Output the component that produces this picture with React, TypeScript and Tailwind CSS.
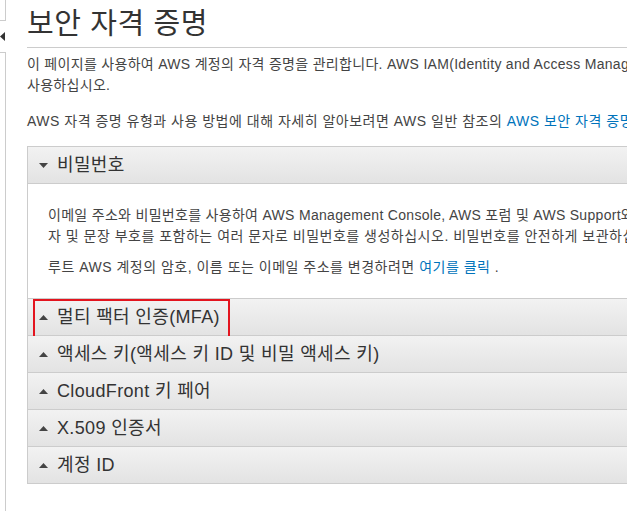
import React from "react";

const font = { fontFamily: '"Liberation Sans", "Noto Sans CJK KR", sans-serif' };

function CaretDown() {
  return (
    <svg width="9" height="5" viewBox="0 0 9 5" className="shrink-0">
      <path d="M0 0 L9 0 L4.5 5 Z" fill="#444" />
    </svg>
  );
}
function CaretUp() {
  return (
    <svg width="9" height="5" viewBox="0 0 9 5" className="shrink-0">
      <path d="M0 5 L9 5 L4.5 0 Z" fill="#444" />
    </svg>
  );
}

function Header({ label, open, highlight }: { label: string; open?: boolean; highlight?: boolean }) {
  return (
    <div className="relative h-[37px] flex items-center pl-[11px] gap-[9px] border-b border-[#cccccc] bg-gradient-to-b from-[#f2f2f2] to-[#e3e3e3] text-[18px] tracking-[0.35px] text-[#333]">
      {open ? <CaretDown /> : <CaretUp />}
      <span className="whitespace-nowrap">{label}</span>
      {highlight && (
        <div className="absolute left-[5px] top-[0px] w-[197px] h-[39px] border-2 border-[#e3141e]" />
      )}
    </div>
  );
}

export default function App() {
  return (
    <div className="w-[627px] h-[511px] overflow-hidden bg-white flex text-[#444]" style={font}>
      <div className="w-[6px] shrink-0 flex flex-col">
        <div className="h-[21px] border-r border-b border-[#cccccc]" />
        <div className="h-[31px] flex items-center">
          <svg width="5" height="9" viewBox="0 0 5 9">
            <path d="M5 0 L5 9 L0 4.5 Z" fill="#333" />
          </svg>
        </div>
        <div className="flex-1 border-r border-t border-[#cccccc]" />
      </div>
      <div className="pl-[21px] w-[960px] shrink-0">
        <h1 className="text-[29px] leading-[40px] pt-[4px] tracking-[0.6px] text-[#333] pb-[3px] border-b border-[#cccccc] whitespace-nowrap">
          보안 자격 증명
        </h1>
        <div className="text-[14px] leading-[21px]">
          <p className="mt-[6px] whitespace-nowrap tracking-[0.3px]">
            이 페이지를 사용하여 AWS 계정의 자격 증명을 관리합니다. AWS IAM(Identity and Access Management)을 사용하여 사용자를 관리하는 것을
            <br />
            사용하십시오.
          </p>
          <p className="mt-[15px] whitespace-nowrap tracking-[0.5px]">
            AWS 자격 증명 유형과 사용 방법에 대해 자세히 알아보려면 AWS 일반 참조의{" "}
            <span className="text-[#0073bb]">AWS 보안 자격 증명</span>을 참조하십시오.
          </p>
        </div>
        <div className="mt-[14px] border border-[#cccccc] border-b-0">
          <Header label="비밀번호" open />
          <div className="bg-white border-b border-[#cccccc] pl-[20px] pt-[21px] pb-[20px] text-[14px] leading-[21px] whitespace-nowrap">
            <p>
              <span className="tracking-[0.3px]">
                이메일 주소와 비밀번호를 사용하여 AWS Management Console, AWS 포럼 및 AWS Support와 같은 보호된 AWS 웹 사이트에 로그인할 수 있습니다. 대문자, 소문자, 숫
              </span>
              <br />
              <span className="tracking-[0.5px]">
                자 및 문장 부호를 포함하는 여러 문자로 비밀번호를 생성하십시오. 비밀번호를 안전하게 보관하십시오.
              </span>
            </p>
            <p className="mt-[10px] tracking-[0.5px]">
              루트 AWS 계정의 암호, 이름 또는 이메일 주소를 변경하려면 <span className="text-[#0073bb]">여기를 클릭</span> .
            </p>
          </div>
          <Header label="멀티 팩터 인증(MFA)" highlight />
          <Header label="액세스 키(액세스 키 ID 및 비밀 액세스 키)" />
          <Header label="CloudFront 키 페어" />
          <Header label="X.509 인증서" />
          <Header label="계정 ID" />
        </div>
      </div>
    </div>
  );
}
